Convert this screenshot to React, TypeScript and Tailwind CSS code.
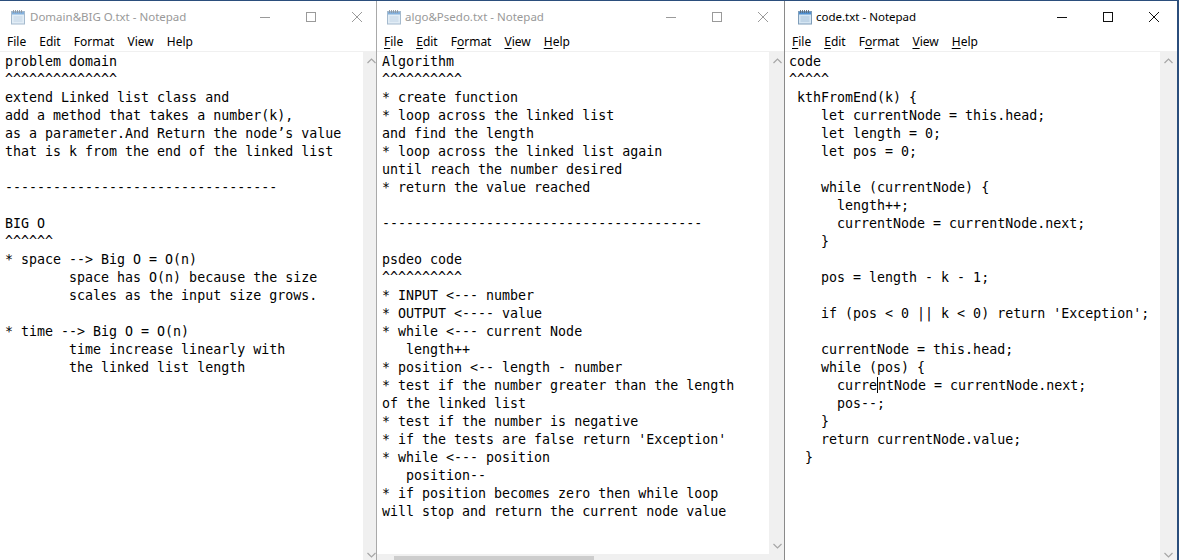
const win1 = [
  "problem domain",
  "^^^^^^^^^^^^^^",
  "extend Linked list class and",
  "add a method that takes a number(k),",
  "as a parameter.And Return the node’s value",
  "that is k from the end of the linked list",
  "",
  "----------------------------------",
  "",
  "BIG O",
  "^^^^^^",
  "* space --> Big O = O(n)",
  "        space has O(n) because the size",
  "        scales as the input size grows.",
  "",
  "* time --> Big O = O(n)",
  "        time increase linearly with",
  "        the linked list length",
].join("\n");

const win2 = [
  "Algorithm",
  "^^^^^^^^^^",
  "* create function",
  "* loop across the linked list",
  "and find the length",
  "* loop across the linked list again",
  "until reach the number desired",
  "* return the value reached",
  "",
  "----------------------------------------",
  "",
  "psdeo code",
  "^^^^^^^^^^",
  "* INPUT <--- number",
  "* OUTPUT <---- value",
  "* while <--- current Node",
  "   length++",
  "* position <-- length - number",
  "* test if the number greater than the length",
  "of the linked list",
  "* test if the number is negative",
  "* if the tests are false return 'Exception'",
  "* while <--- position",
  "   position--",
  "* if position becomes zero then while loop",
  "will stop and return the current node value",
].join("\n");

const win3Before = [
  "code",
  "^^^^^",
  " kthFromEnd(k) {",
  "    let currentNode = this.head;",
  "    let length = 0;",
  "    let pos = 0;",
  "",
  "    while (currentNode) {",
  "      length++;",
  "      currentNode = currentNode.next;",
  "    }",
  "",
  "    pos = length - k - 1;",
  "",
  "    if (pos < 0 || k < 0) return 'Exception';",
  "",
  "    currentNode = this.head;",
  "    while (pos) {",
  "      curre",
].join("\n");

const win3After = [
  "ntNode = currentNode.next;",
  "      pos--;",
  "    }",
  "    return currentNode.value;",
  "  }",
].join("\n");

function NotepadIcon({ dim }: { dim?: boolean }) {
  return (
    <svg width="16" height="16" viewBox="0 0 16 16" className={dim ? "opacity-70" : ""}>
      <rect x="1.5" y="2.5" width="13" height="12.5" fill="#d6e6f3" stroke="#7f9db9" />
      <rect x="2" y="3" width="12" height="2.5" fill="#4f8fcf" />
      <path d="M3.5 1v3M5.5 1v3M7.5 1v3M9.5 1v3M11.5 1v3" stroke="#5b6b7b" strokeWidth="0.9" />
      <path d="M3.5 8h9M3.5 10h9M3.5 12h9" stroke="#9fbad3" strokeWidth="0.8" />
    </svg>
  );
}

function TitleButtons({ active }: { active?: boolean }) {
  const c = active ? "#111" : "#9a9a9a";
  return (
    <div className="flex h-full">
      <div className="w-[46px] flex items-center justify-center">
        <svg width="10" height="10" viewBox="0 0 10 10">
          <path d="M0 5.5h10" stroke={c} strokeWidth="1" />
        </svg>
      </div>
      <div className="w-[46px] flex items-center justify-center">
        <svg width="10" height="10" viewBox="0 0 10 10">
          <rect x="0.5" y="0.5" width="9" height="9" fill="none" stroke={c} strokeWidth="1" />
        </svg>
      </div>
      <div className="w-[46px] flex items-center justify-center">
        <svg width="10" height="10" viewBox="0 0 10 10">
          <path d="M0 0L10 10M10 0L0 10" stroke={c} strokeWidth="1" />
        </svg>
      </div>
    </div>
  );
}

function Menu({ underline }: { underline?: boolean }) {
  const u = underline ? "underline underline-offset-2" : "";
  return (
    <div className="h-[19px] flex items-center pl-[7px] gap-[13px] text-[12px] text-black">
      <span><span className={u}>F</span>ile</span>
      <span><span className={u}>E</span>dit</span>
      <span>F<span className={u}>o</span>rmat</span>
      <span><span className={u}>V</span>iew</span>
      <span><span className={u}>H</span>elp</span>
    </div>
  );
}

function VScroll() {
  return (
    <div className="w-[17px] bg-[#f0f0f0] flex flex-col justify-between items-center">
      <div className="h-[17px] flex items-center justify-center">
        <svg width="9" height="6" viewBox="0 0 9 6">
          <path d="M0.5 5L4.5 1L8.5 5" fill="none" stroke="#a6a6a6" strokeWidth="1.2" />
        </svg>
      </div>
      <div className="h-[17px] flex items-center justify-center">
        <svg width="9" height="6" viewBox="0 0 9 6">
          <path d="M0.5 1L4.5 5L8.5 1" fill="none" stroke="#a6a6a6" strokeWidth="1.2" />
        </svg>
      </div>
    </div>
  );
}

const mono = "font-['DejaVu_Sans_Mono','Liberation_Mono',monospace] text-[13.3px] leading-[18px] text-black whitespace-pre";
const ui = "font-['Noto_Sans','Open_Sans',sans-serif]";

export default function App() {
  return (
    <div className={`w-[1179px] h-[560px] overflow-hidden flex bg-white border-t border-[#2b4e7c] ${ui}`}>
      {/* window 1, partly behind window 2 */}
      <div className="w-[376px] h-full overflow-hidden shrink-0">
        <div className="w-[380px] h-[562px] flex flex-col bg-white">
          <div className="h-[31px] flex items-center justify-between">
            <div className="flex items-center gap-[4px] pl-[10px] text-[11.5px] text-[#999]">
              <NotepadIcon dim />
              <span>Domain&amp;BIG O.txt - Notepad</span>
            </div>
            <TitleButtons />
          </div>
          <Menu />
          <div className="flex-1 flex border-t border-[#f0f0f0]">
            <div className={`flex-1 pl-[5px] pt-[1px] ${mono}`}>{win1}</div>
            <VScroll />
          </div>
        </div>
      </div>

      {/* window 2 */}
      <div className="w-[408px] h-full overflow-hidden shrink-0 border-l border-[#a9a9a9]">
        <div className="w-[409px] h-[570px] flex flex-col bg-white">
          <div className="h-[31px] flex items-center justify-between">
            <div className="flex items-center gap-[3px] pl-[9px] text-[11.5px] text-[#999]">
              <NotepadIcon dim />
              <span>algo&amp;Psedo.txt - Notepad</span>
            </div>
            <TitleButtons />
          </div>
          <Menu underline />
          <div className="flex-1 flex flex-col border-t border-[#f0f0f0]">
            <div className="flex-1 flex">
              <div className={`flex-1 pl-[5px] pt-[1px] ${mono}`}>{win2}</div>
              <VScroll />
            </div>
            <div className="h-[17px] bg-[#f0f0f0] flex items-start pl-[17px] pt-[2px]">
              <div className="w-[200px] h-[12px] bg-[#cdcdcd]" />
            </div>
          </div>
        </div>
      </div>

      {/* window 3, active */}
      <div className="flex-1 h-full overflow-hidden border-l border-[#8a8a8a] border-r-2 border-r-[#2b4e7c]">
        <div className="w-full h-[562px] flex flex-col bg-white">
          <div className="h-[31px] flex items-center justify-between">
            <div className="flex items-center gap-[3px] pl-[12px] text-[11.5px] text-black">
              <NotepadIcon />
              <span>code.txt - Notepad</span>
            </div>
            <TitleButtons active />
          </div>
          <Menu underline />
          <div className="flex-1 flex border-t border-[#f0f0f0]">
            <div className={`flex-1 pl-[4px] pt-[1px] ${mono}`}>
              {win3Before}
              <span className="inline-block w-0 h-[16px] align-[-3px] border-l border-black" />
              {win3After}
            </div>
            <VScroll />
          </div>
        </div>
      </div>
    </div>
  );
}
